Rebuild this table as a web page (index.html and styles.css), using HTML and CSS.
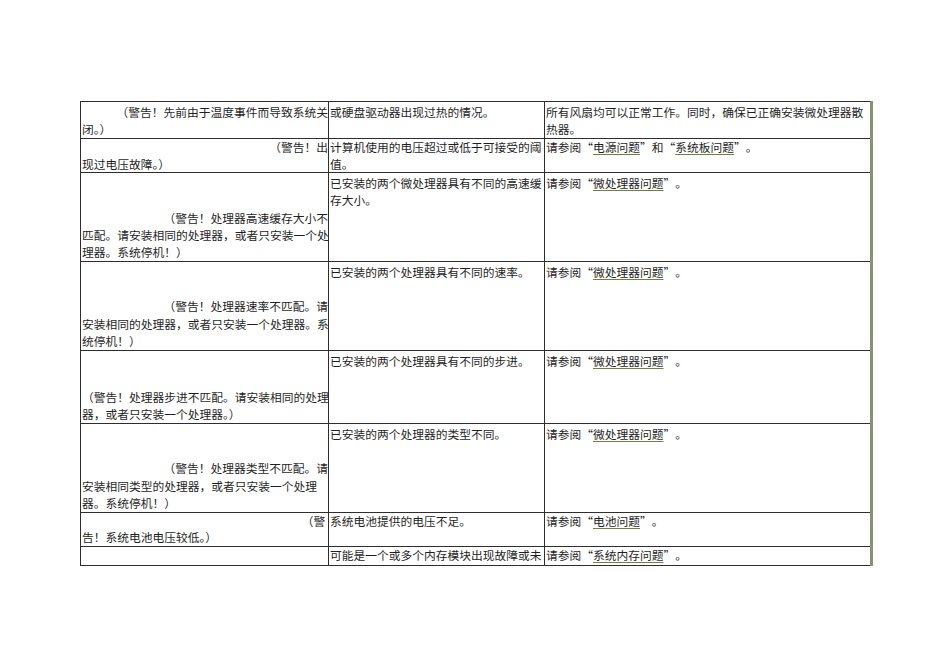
FILE: index.html
```html
<!DOCTYPE html>
<html lang="zh-CN">
<head>
<meta charset="utf-8">
<title>警告信息</title>
<link rel="stylesheet" href="styles.css">
</head>
<body>
<div class="page">
<table class="msgs">
  <colgroup><col class="c1"><col class="c2"><col class="c3"></colgroup>
  <tr class="h1">
    <td><div class="r">（警告！先前由于温度事件而导致系统关</div><div>闭。）</div></td>
    <td><div>或硬盘驱动器出现过热的情况。</div></td>
    <td><div>所有风扇均可以正常工作。同时，确保已正确安装微处理器散</div><div>热器。</div></td>
  </tr>
  <tr class="h2 tight">
    <td><div class="r">（警告！出</div><div>现过电压故障。）</div></td>
    <td><div>计算机使用的电压超过或低于可接受的阈</div><div>值。</div></td>
    <td><div>请参阅<span class="ql">“</span><a href="#">电源问题</a><span class="qr">”</span>和<span class="ql">“</span><a href="#">系统板问题</a><span class="qr">”</span>。</div></td>
  </tr>
  <tr class="h3">
    <td><div class="r skip">（警告！处理器高速缓存大小不</div><div>匹配。请安装相同的处理器，或者只安装一个处</div><div>理器。系统停机！）</div></td>
    <td><div>已安装的两个微处理器具有不同的高速缓</div><div>存大小。</div></td>
    <td><div>请参阅<span class="ql">“</span><a href="#">微处理器问题</a><span class="qr">”</span>。</div></td>
  </tr>
  <tr class="h4">
    <td><div class="r skip">（警告！处理器速率不匹配。请</div><div>安装相同的处理器，或者只安装一个处理器。系</div><div>统停机！）</div></td>
    <td><div>已安装的两个处理器具有不同的速率。</div></td>
    <td><div>请参阅<span class="ql">“</span><a href="#">微处理器问题</a><span class="qr">”</span>。</div></td>
  </tr>
  <tr class="h5">
    <td><div class="skip-lg">（警告！处理器步进不匹配。请安装相同的处理</div><div>器，或者只安装一个处理器。）</div></td>
    <td><div>已安装的两个处理器具有不同的步进。</div></td>
    <td><div>请参阅<span class="ql">“</span><a href="#">微处理器问题</a><span class="qr">”</span>。</div></td>
  </tr>
  <tr class="h6">
    <td><div class="r skip">（警告！处理器类型不匹配。请</div><div>安装相同类型的处理器，或者只安装一个处理</div><div>器。系统停机！）</div></td>
    <td><div>已安装的两个处理器的类型不同。</div></td>
    <td><div>请参阅<span class="ql">“</span><a href="#">微处理器问题</a><span class="qr">”</span>。</div></td>
  </tr>
  <tr class="h7 tight">
    <td><div class="r">（警&nbsp;</div><div>告！系统电池电压较低。）</div></td>
    <td><div>系统电池提供的电压不足。</div></td>
    <td><div>请参阅<span class="ql">“</span><a href="#">电池问题</a><span class="qr">”</span>。</div></td>
  </tr>
  <tr class="h8 tight">
    <td></td>
    <td><div>可能是一个或多个内存模块出现故障或未</div></td>
    <td><div>请参阅<span class="ql">“</span><a href="#">系统内存问题</a><span class="qr">”</span>。</div></td>
  </tr>
</table>
</div>
</body>
</html>
```
FILE: styles.css
```css
html, body {
  margin: 0;
  padding: 0;
  background: #ffffff;
}

.page {
  padding: 101px 0 0 80px;
}

.msgs {
  border-collapse: collapse;
  table-layout: fixed;
  width: 791px;
  font-family: "Noto Sans CJK SC", sans-serif;
  font-size: 11.75px;
  line-height: 17.4px;
  color: #1f1f1f;
}

.c1 { width: 248px; }
.c2 { width: 216px; }
.c3 { width: 327px; }

.msgs td {
  border: 1px solid #2e2e2e;
  padding: 1px 0 0 1px;
  vertical-align: top;
  white-space: nowrap;
  overflow: visible;
}

.msgs td:last-child {
  border-right: 3px solid #869570;
}

.h1 { height: 37px; }
.h2 { height: 34px; }
.h3 { height: 88px; }
.h4 { height: 89px; }
.h5 { height: 73px; }
.h6 { height: 89px; }
.h7 { height: 34px; }
.h8 { height: 19px; }

.tight td {
  line-height: 16.5px;
  padding-top: 0;
}

.r {
  text-align: right;
}

.skip {
  margin-top: 34.5px;
}

.skip-lg {
  margin-top: 36px;
}

.ql,
.qr {
  display: inline-block;
  width: 1em;
}

.ql { text-align: right; }
.qr { text-align: left; }

.msgs a {
  color: #1f1f1f;
  text-decoration: underline;
  text-decoration-color: #6f7f3c;
  text-underline-offset: 2px;
}
```
